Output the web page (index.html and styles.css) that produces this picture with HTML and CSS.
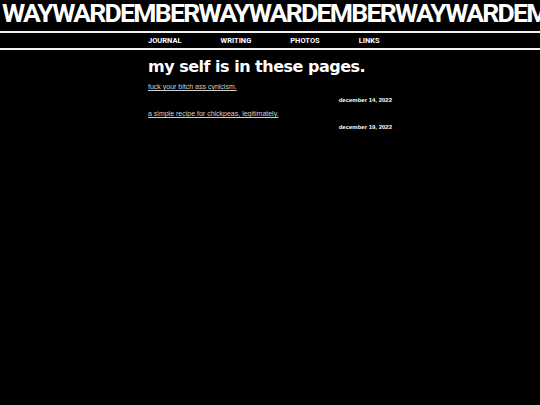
FILE: index.html
```html
<!DOCTYPE html>
<html lang="en">
<head>
<meta charset="utf-8">
<title>waywardember</title>
<link rel="stylesheet" href="styles.css">
</head>
<body>
<header class="banner"><span class="banner-text">WAYWARDEMBERWAYWARDEMBERWAYWARDEMBERWAYWARDEMBER</span></header>
<nav class="nav">
  <div class="wrap nav-links">
    <a href="#">JOURNAL</a>
    <a href="#">WRITING</a>
    <a href="#">PHOTOS</a>
    <a href="#">LINKS</a>
  </div>
</nav>
<main class="wrap">
  <h1 class="title">my self is in these pages.</h1>
  <section class="post">
    <a class="post-link" href="#">fuck your bitch ass cynicism.</a>
    <div class="post-date">december 14, 2022</div>
  </section>
  <section class="post">
    <a class="post-link" href="#">a simple recipe for chickpeas, legitimately.</a>
    <div class="post-date">december 19, 2022</div>
  </section>
</main>
</body>
</html>
```

FILE: styles.css
```css
html, body {
  margin: 0;
  padding: 0;
  background: #000;
  color: #fff;
}

body {
  font-family: "Liberation Sans", Arial, sans-serif;
}

.banner {
  font-family: Roboto, "Liberation Sans", sans-serif;
  font-weight: 700;
  font-size: 26.5px;
  line-height: 26px;
  letter-spacing: -1.7px;
  white-space: nowrap;
  overflow: hidden;
  padding-left: 2px;
  margin-bottom: 5px;
}

.nav {
  border-top: 2px solid #f2f2f2;
  border-bottom: 2px solid #f2f2f2;
  height: 15px;
  display: flex;
  align-items: center;
}

.wrap {
  width: 244px;
  margin: 0 auto;
}

.nav-links {
  display: flex;
  gap: 39px;
}

.nav-links a {
  color: #fff;
  text-decoration: none;
  font-family: Roboto, "Liberation Sans", sans-serif;
  font-weight: 700;
  font-size: 7.5px;
  line-height: 15px;
}

.title {
  font-family: "DejaVu Sans", sans-serif;
  font-weight: 700;
  font-size: 16px;
  line-height: 18px;
  letter-spacing: -0.5px;
  margin: 8px 0 4px;
}

.post-link {
  display: block;
  color: #d0d0d0;
  font-size: 7px;
  line-height: 13px;
}

.post-date {
  text-align: right;
  font-weight: 700;
  font-size: 6px;
  line-height: 14px;
}
```
